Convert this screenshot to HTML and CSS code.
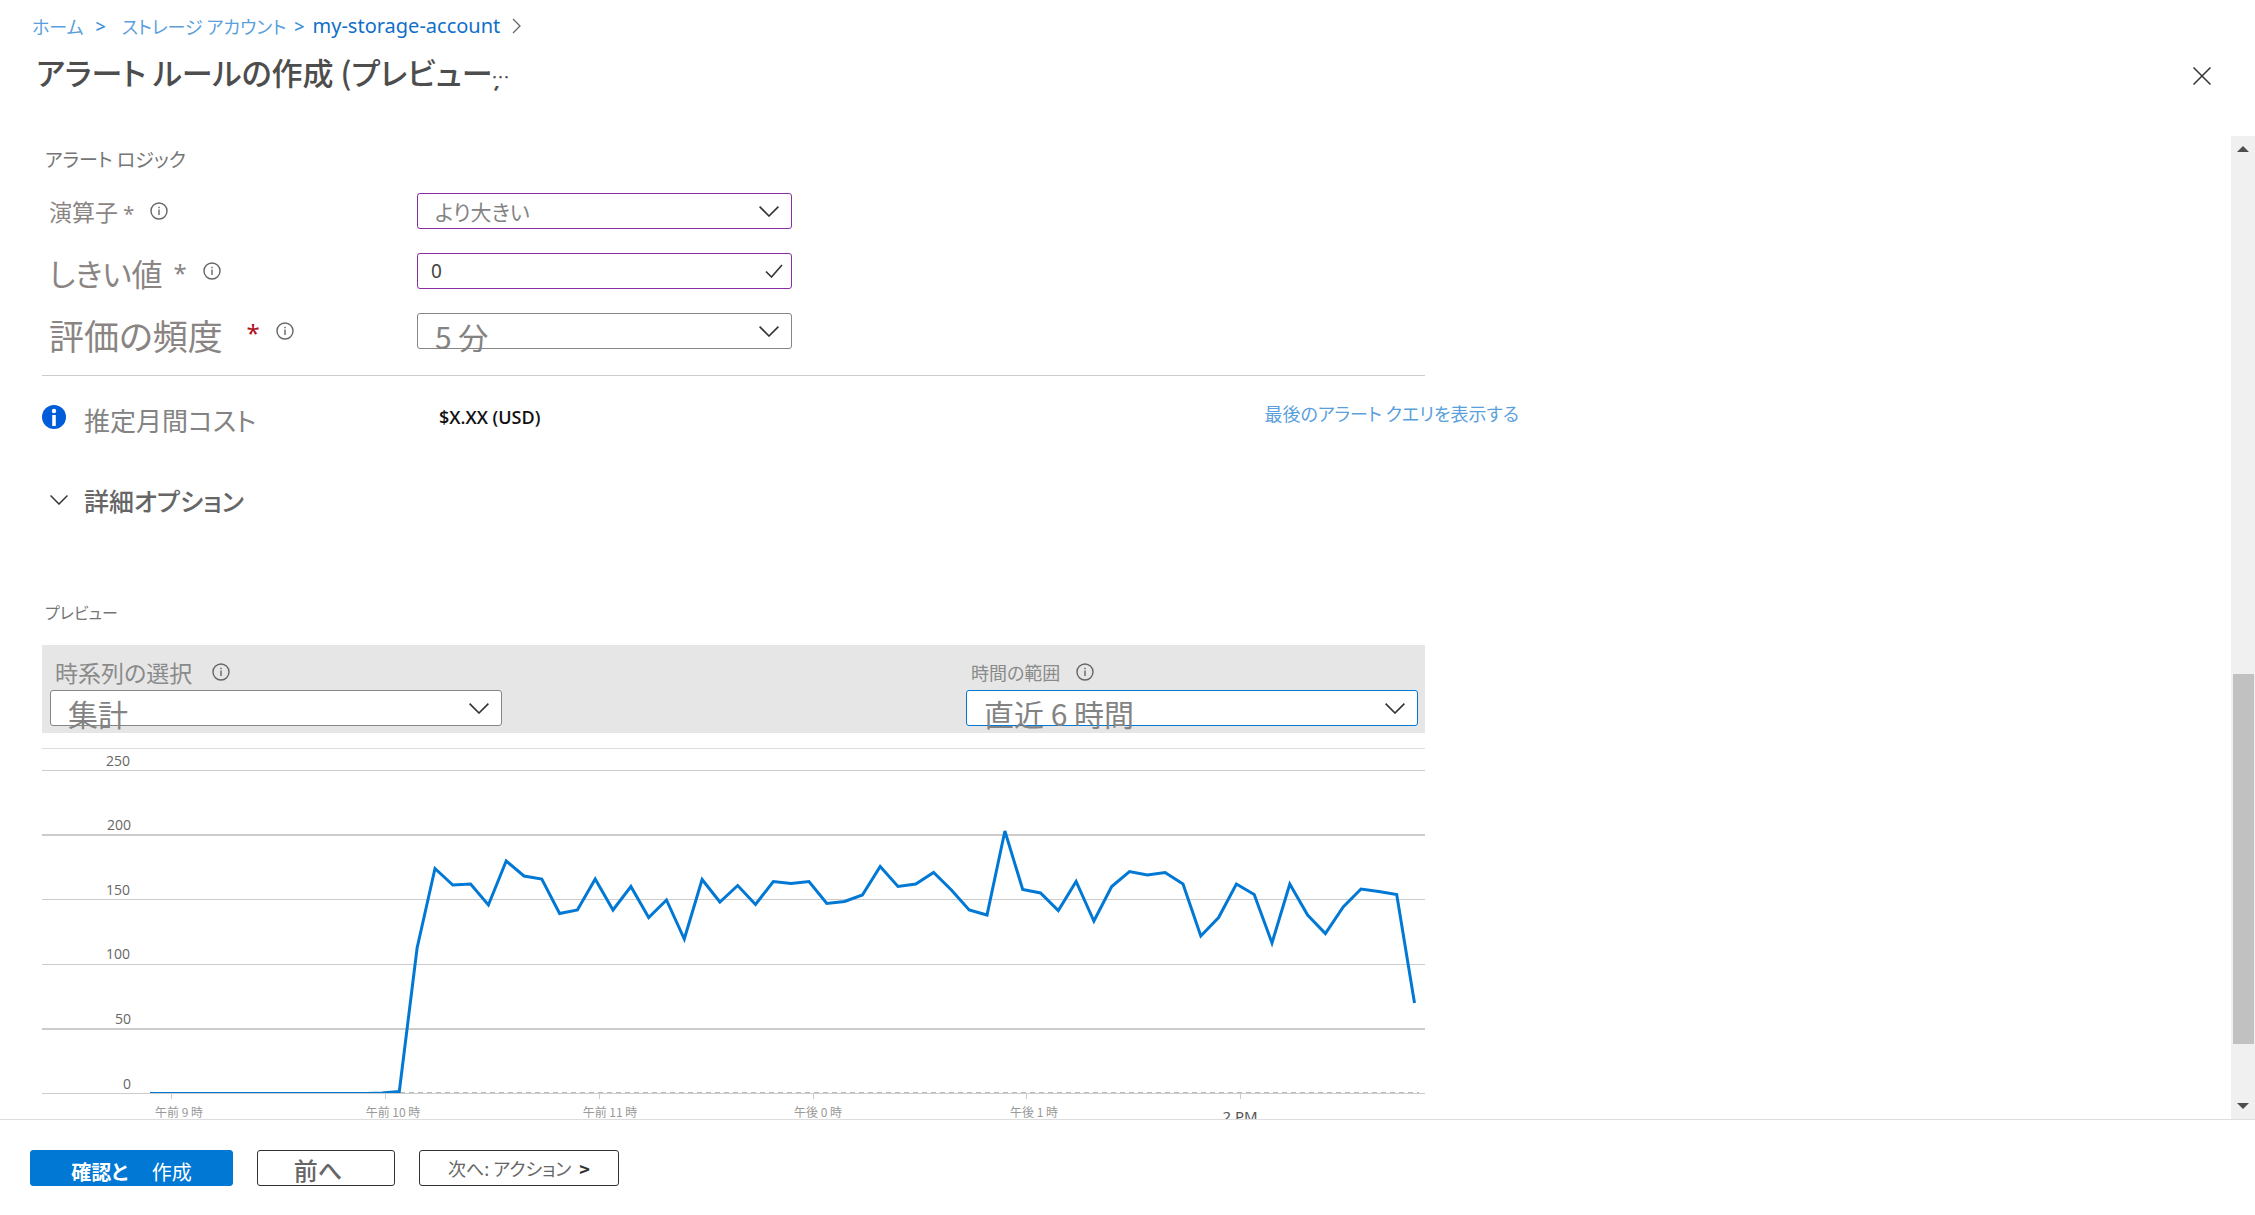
FILE: index.html
```html
<!DOCTYPE html>
<html lang="ja">
<head>
<meta charset="utf-8">
<meta name="viewport" content="width=device-width, initial-scale=1">
<title>アラート ルールの作成 (プレビュー)</title>
<link rel="stylesheet" href="styles.css">
</head>
<body>
<svg class="sprite" aria-hidden="true">
  <symbol id="info" viewBox="0 0 18 18"><circle cx="9" cy="9" r="8" fill="none" stroke="currentColor" stroke-width="1.4"/><path d="M9 7.5v5.5M9 4.8v1.5" stroke="currentColor" stroke-width="1.4"/></symbol>
  <symbol id="chevron" viewBox="0 0 20 11"><path d="M.6.6 10 10 19.4.6" fill="none" stroke="currentColor" stroke-width="1.6"/></symbol>
</svg>
<div class="page">
  <header class="header">
    <nav class="breadcrumb" aria-label="階層リンク">
      <a class="crumb home" href="#">ホーム</a><span class="sep">&gt;</span>
      <a class="crumb storage" href="#">ストレージ アカウント</a><span class="sep">&gt;</span>
      <a class="crumb account" href="#">my-storage-account</a>
      <svg class="crumb-chevron" viewBox="0 0 9 16" aria-hidden="true"><path d="M1 1l7 7-7 7" fill="none" stroke="currentColor" stroke-width="1.3"/></svg>
    </nav>
    <div class="title-row">
      <h1>アラート ルールの作成 (プレビュー)</h1>
      <button class="more" type="button" aria-label="その他">…</button>
      <button class="close" type="button" aria-label="閉じる"><svg viewBox="0 0 18 18" aria-hidden="true"><path d="M.5.5l17 17M17.5.5l-17 17" stroke="currentColor" stroke-width="1.5"/></svg></button>
    </div>
  </header>
  <div class="body">
    <main class="content">
      <h2 class="section-title">アラート ロジック</h2>
      <form class="logic">
        <div class="field">
          <label class="name" for="operator">演算子 <span class="star">*</span></label>
          <svg class="info"><use href="#info"/></svg>
          <div class="control edited"><select id="operator"><option>より大きい</option></select><svg class="mark"><use href="#chevron"/></svg></div>
        </div>
        <div class="field">
          <label class="name large" for="threshold">しきい値 <span class="star">*</span></label>
          <svg class="info"><use href="#info"/></svg>
          <div class="control edited"><input id="threshold" type="text" value="0"><svg class="mark check" viewBox="0 0 18 14"><path d="M1 7.5L6.500 13 17 1" fill="none" stroke="currentColor" stroke-width="1.6"/></svg></div>
        </div>
        <div class="field">
          <label class="name xlarge" for="frequency">評価の頻度 <span class="star required">*</span></label>
          <svg class="info"><use href="#info"/></svg>
          <div class="control"><select class="big" id="frequency"><option>5 分</option></select><svg class="mark"><use href="#chevron"/></svg></div>
        </div>
      </form>
      <div class="cost">
        <svg class="cost-icon" viewBox="0 0 24 24" aria-hidden="true"><circle cx="12" cy="12" r="12" fill="#015cda"/><circle cx="12" cy="6" r="2.2" fill="#fff"/><path d="M12 10v11" stroke="#fff" stroke-width="3.6"/></svg>
        <span class="cost-label">推定月間コスト</span>
        <span class="cost-value">$X.XX (USD)</span>
        <a class="query-link" href="#">最後のアラート クエリを表示する</a>
      </div>
      <button class="advanced" type="button"><svg><use href="#chevron"/></svg>詳細オプション</button>
      <h2 class="section-title preview-title">プレビュー</h2>
      <div class="filters">
        <div class="filter">
          <div class="filter-head"><label class="series" for="series">時系列の選択</label><svg class="info"><use href="#info"/></svg></div>
          <div class="control"><select class="big" id="series"><option>集計</option></select><svg class="mark"><use href="#chevron"/></svg></div>
        </div>
        <div class="filter">
          <div class="filter-head"><label class="range" for="range">時間の範囲</label><svg class="info"><use href="#info"/></svg></div>
          <div class="control focused"><select class="big" id="range"><option>直近 6 時間</option></select><svg class="mark"><use href="#chevron"/></svg></div>
        </div>
      </div>
      <svg class="chart" viewBox="0 0 1383 384" role="img" aria-label="プレビュー グラフ">
        <clipPath id="plot"><path d="M0 0H1383V357H0z"/></clipPath>
        <g class="grid">
          <path class="top" d="M0 12.500H1383"/>
          <path d="M0 34.500H1383M0 163.500H1383M0 228.500H1383M0 357.500H1383"/>
          <path class="strong" d="M0 99H1383M0 293H1383"/>
          <path d="M129.500 358v5M343.500 358v5M557.500 358v5M771.500 358v5M984.500 358v5M1198.500 358v5"/>
          <path class="dash" d="M358 356.500H1377"/>
        </g>
        <g class="y-axis">
          <text x="88" y="30">250</text><text x="89" y="94">200</text><text x="88" y="159">150</text><text x="88" y="223">100</text><text x="89" y="288">50</text><text x="89" y="353">0</text>
        </g>
        <polyline class="line" clip-path="url(#plot)" points="108,357.500 325,357.500 340,357 357.300,355.500 375.100,212 393,132.500 410.800,149 428.600,148 446.400,169 464.200,125 482,140 499.800,143 517.600,177.500 535.400,174 553.200,143 571,174 588.900,150.500 606.700,181.500 624.500,164 642.300,203 660.100,143.500 677.900,166 695.700,149.500 713.500,168.500 731.300,145.500 749.100,147.500 767,145.500 784.800,167.500 802.600,165.500 820.400,159 838.200,130.500 856,150.500 873.800,148 891.600,136.500 909.400,154 927.200,174 945,179 962.900,95 980.700,153.500 998.500,157 1016.300,174.500 1034.100,145.500 1051.900,185 1069.700,150.500 1087.500,135.500 1105.300,139 1123.100,136.500 1141,148 1158.800,200 1176.600,181.500 1194.400,148 1212.200,158.500 1230,207 1247.800,148 1265.600,179 1283.400,197.500 1301.200,171 1319,153 1336.900,155.500 1354.700,158.500 1372.500,267"/>
        <g class="x-axis">
          <text x="137" y="381">午前 9 時</text><text x="351" y="381">午前 10 時</text><text x="568" y="381">午前 11 時</text><text x="776" y="381">午後 0 時</text><text x="992" y="381">午後 1 時</text><text class="latin" x="1198" y="386">2 PM</text>
        </g>
      </svg>
    </main>
    <div class="scrollbar" aria-hidden="true">
      <svg viewBox="0 0 12 6"><path d="M0 6L6 0l6 6z" fill="currentColor"/></svg>
      <div class="track"><div class="thumb"></div></div>
      <svg viewBox="0 0 12 6"><path d="M0 0l6 6 6-6z" fill="currentColor"/></svg>
    </div>
  </div>
  <footer class="footer">
    <button class="btn primary" type="button"><b>確認と</b><span>作成</span></button>
    <button class="btn previous" type="button">前へ</button>
    <button class="btn next" type="button">次へ: アクション<b>&gt;</b></button>
  </footer>
</div>
</body>
</html>
```
FILE: styles.css
```css
* { box-sizing: border-box; }
body {
  margin: 0;
  background: #fff;
  color: #838383;
  font-family: "Noto Sans CJK JP", "Noto Sans", sans-serif;
  font-feature-settings: "palt";
}
button, input, select { font: inherit; font-feature-settings: inherit; color: inherit; }
button { border: 0; padding: 0; background: none; }
a { text-decoration: none; color: #5a9fdc; }
svg { display: block; flex: none; }
.sprite { display: none; }
.page { display: flex; flex-direction: column; height: 100vh; }

.header { flex: none; height: 136px; padding: 10px 44px 0 32px; }
.breadcrumb { display: flex; align-items: center; height: 32px; font-size: 18px; line-height: 32px; }
.sep { font: 600 18px/32px "Open Sans", sans-serif; color: #3f8fd8; }
.home { margin-right: 12px; }
.storage { margin: 0 8px 0 16px; }
.account { margin: 0 12px 0 8px; font-family: "Noto Sans", sans-serif; font-size: 20px; color: #0f6fc9; }
.crumb-chevron { width: 9px; height: 16px; color: #666; }
.title-row { display: flex; align-items: center; height: 68px; padding-left: 4px; }
h1 { margin: 0; padding-bottom: 8px; font-size: 31px; font-weight: 500; line-height: 48px; color: #4d4d4d; }
.more { position: relative; z-index: 1; align-self: flex-start; height: 28px; margin: 16px 0 0 -12px; background: #fff; font-size: 18px; line-height: 36px; color: #4d4d4d; }
.close { margin-left: auto; color: #333; }
.close svg { width: 18px; height: 18px; }

.body { display: flex; flex: 1; min-height: 0; }
.content { flex: 1; min-width: 0; padding-left: 42px; overflow: hidden; }
.section-title { margin: 0; padding-left: 3px; font-size: 19px; font-weight: 400; line-height: 46px; color: #757575; }
.logic { display: flex; flex-direction: column; gap: 24px; max-width: 1383px; padding: 11px 0 26px; border-bottom: 1px solid #ccc; }
.field { display: flex; align-items: center; height: 36px; }
.name { padding-left: 7px; font-size: 23px; line-height: 36px; color: #8a8583; white-space: nowrap; }
.name.large { padding-top: 4px; font-size: 31px; }
.name.xlarge { padding-top: 8px; font-size: 35px; }
.star { font: 400 20px/20px "Noto Sans", sans-serif; }
.large .star { margin-left: 4px; font-size: 24px; vertical-align: 4px; }
.xlarge .star { margin-left: 16px; font-size: 24px; vertical-align: 8px; color: #b0101c; }
.info { width: 18px; height: 18px; margin-left: 16px; color: #666; }
.field .control { width: 375px; margin-left: auto; margin-right: 633px; }
.control { position: relative; height: 36px; border: 1px solid #868686; border-radius: 3px; background: #fff; }
.edited { border-color: #8a2da5; }
.focused { border-color: #0078d4; }
.control select, .control input { display: block; width: 100%; height: 34px; padding: 0 40px 0 17px; border: 0; border-radius: 3px; outline: 0; background: transparent; appearance: none; font-size: 21px; line-height: 34px; }
.control input { padding-left: 13px; font-family: "Noto Sans", sans-serif; font-size: 19px; color: #444; }
.control .big { height: 40px; padding-top: 4px; font-size: 30px; line-height: 36px; }
.mark { position: absolute; right: 12px; top: 12px; width: 20px; height: 11px; color: #333; pointer-events: none; }
.check { right: 8px; top: 10px; width: 18px; height: 14px; }

.cost { display: flex; align-items: center; max-width: 1477px; height: 82px; }
.cost-icon { width: 24px; height: 24px; }
.cost-label { width: 355px; padding: 6px 0 0 18px; font-size: 26px; line-height: 36px; }
.cost-value { padding-left: 18px; font: 600 18px/36px "Open Sans", sans-serif; color: #111; }
.query-link { margin-left: auto; padding-bottom: 8px; font-size: 18px; line-height: 28px; }
.advanced { display: flex; align-items: center; gap: 16px; height: 84px; padding-left: 8px; font-size: 25px; font-weight: 500; line-height: 36px; color: #666; }
.advanced svg { width: 18px; height: 10px; color: #333; }
.preview-title { padding-top: 46px; font-size: 16px; line-height: 48px; }

.filters { display: flex; justify-content: space-between; max-width: 1383px; height: 88px; margin-top: 9px; padding: 9px 7px 7px 8px; background: #e6e6e6; }
.filter { width: 452px; }
.filter-head { display: flex; align-items: center; height: 36px; padding-left: 5px; line-height: 36px; color: #8a8a8a; }
.series { font-size: 23px; }
.series + .info { margin-left: 20px; }
.range { font-size: 18px; }
.chart { display: block; width: 100%; max-width: 1383px; margin-top: 3px; overflow: visible; }
.grid path { fill: none; stroke: #ccc; stroke-width: 1; }
.grid .top { stroke: #ddd; }
.grid .strong { stroke-width: 2; }
.grid .dash { stroke: #bbb; stroke-dasharray: 5 4; }
.line { fill: none; stroke: #0078d4; stroke-width: 3; }
.y-axis { font: 14px "Open Sans", sans-serif; text-anchor: end; fill: #666; }
.x-axis { font-size: 12px; text-anchor: middle; fill: #999; }
.x-axis .latin { font: 15px "Noto Sans", sans-serif; fill: #555; }

.scrollbar { display: flex; flex-direction: column; align-items: center; flex: none; width: 24px; padding: 10px 0; background: #f0f0f0; color: #4d4d4d; }
.scrollbar svg { width: 12px; height: 6px; }
.track { display: grid; grid-template-rows: 514fr 370fr 51fr; flex: 1; width: 21px; margin: 8px 0; }
.thumb { grid-row: 2; background: #c1c1c1; }

.footer { display: flex; flex: none; gap: 24px; height: 96px; padding: 30px; border-top: 1px solid #ddd; }
.btn { height: 36px; border: 1px solid #333; border-radius: 3px; font-size: 20px; line-height: 34px; color: #666; white-space: nowrap; }
.primary { display: flex; justify-content: center; gap: 24px; width: 203px; padding-top: 4px; border-color: #0078d4; background: #0078d4; color: #fff; }
.previous { width: 138px; padding: 2px 16px 0 0; font-size: 24px; font-weight: 500; }
.next { width: 200px; font-size: 18px; }
.next b { margin-left: 8px; font-weight: 600; color: #333; }
```
